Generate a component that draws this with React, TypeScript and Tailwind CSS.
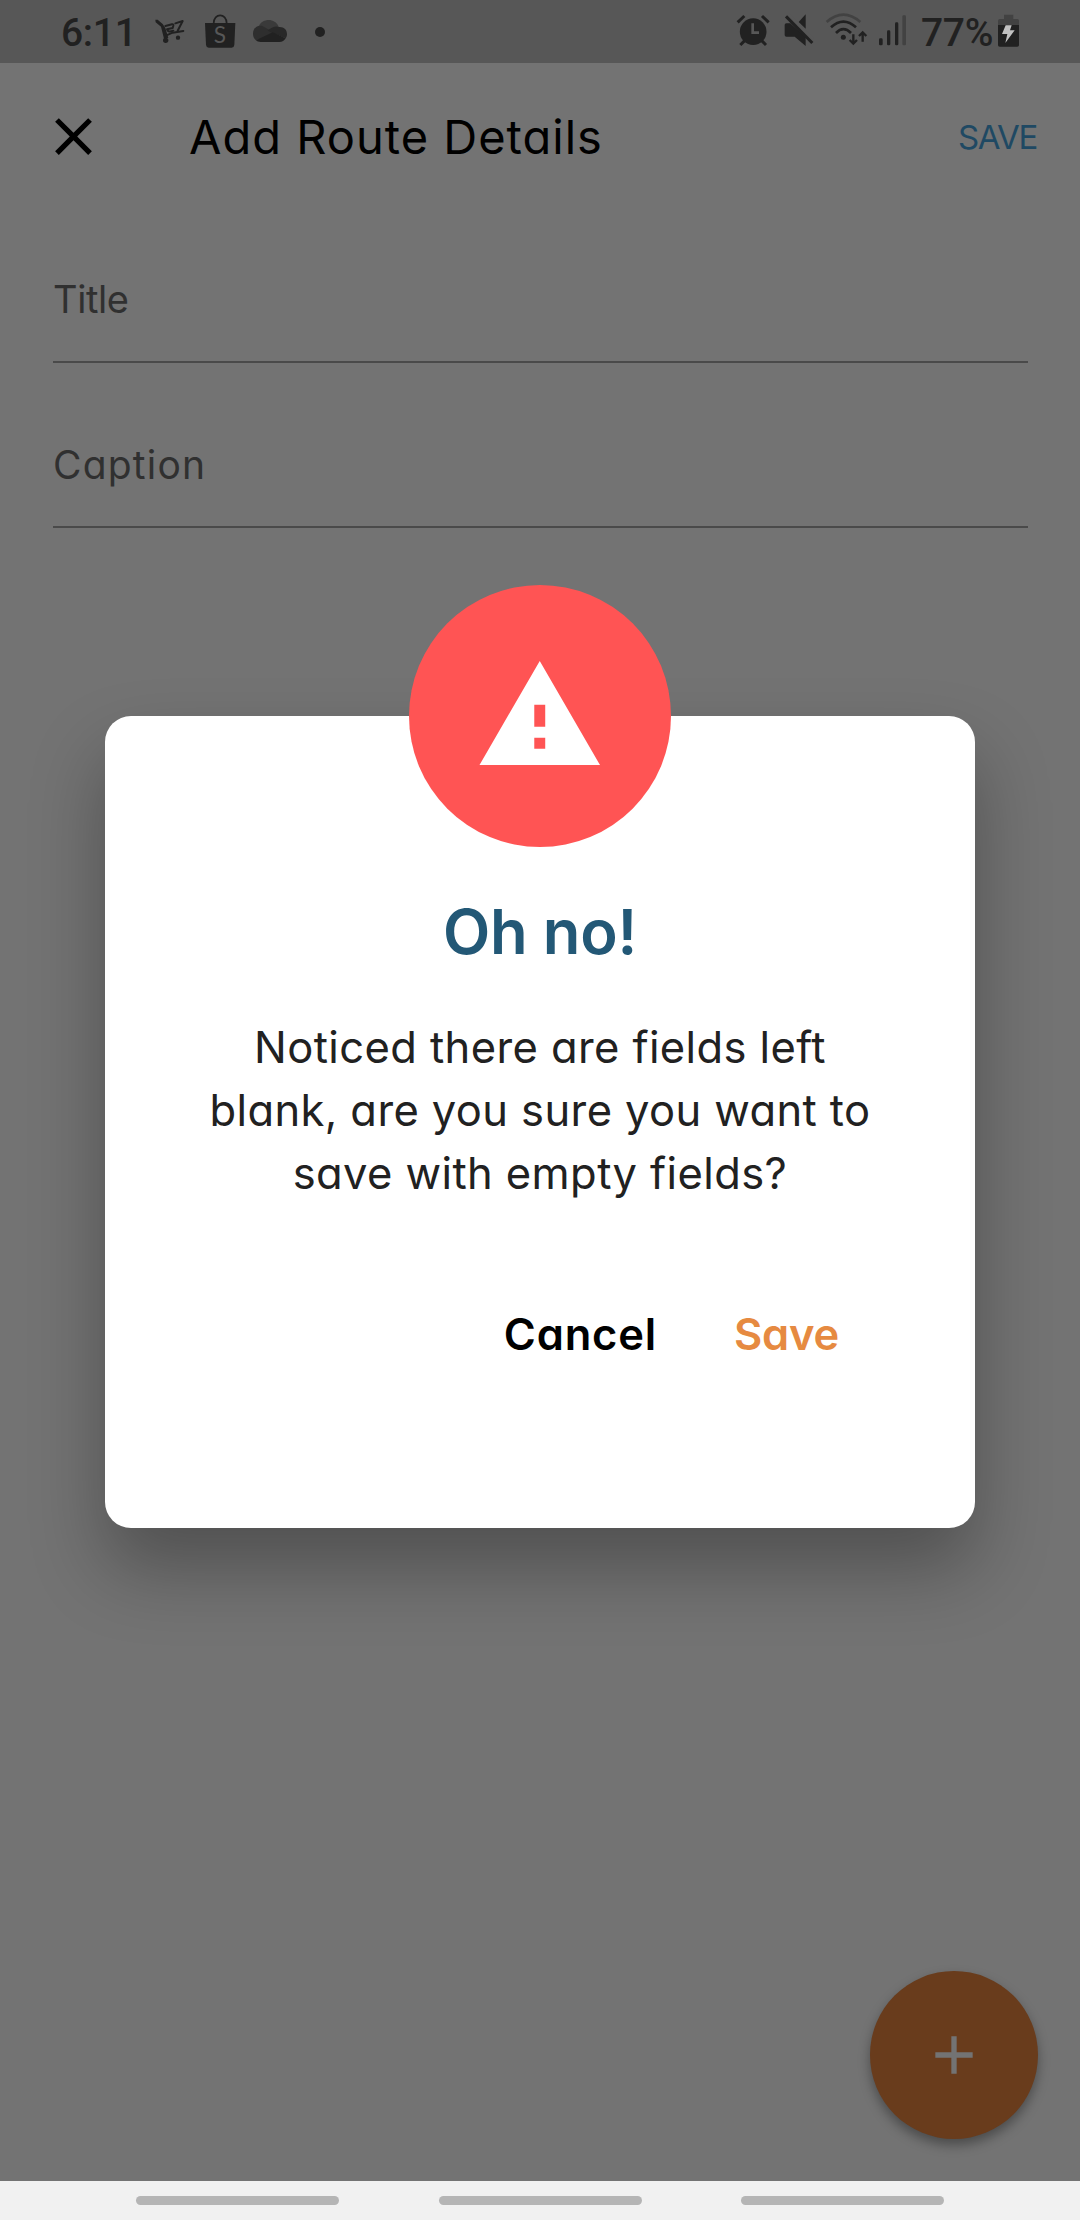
import type { ReactNode } from 'react';

const INK = '#212121';

// Status icons share a 189-unit tall drawing space, three units per pixel.
function StatusIcon({ x, w, children }: { x: number; w: number; children: ReactNode }) {
  return (
    <svg className="shrink-0" width={w / 3} height={63} viewBox={`${x} 0 ${w} 189`} fill={INK}>
      {children}
    </svg>
  );
}

function StatusBar() {
  return (
    <div className="flex h-[63px] shrink-0 items-center justify-between bg-[#575757] pr-[61px] pl-[61px] font-['Roboto',sans-serif] text-[39px] leading-[60px] font-medium text-[#212121]">
      <div className="flex items-center">
        <span className="w-[92px] pt-[2px] tracking-[-0.3px]">6:11</span>
        <StatusIcon x={339} w={102}>
          <path d="M346 59 L353 59 L368 72 L376 84 L385 114 L372 116 L363 80 L347 67 Z" />
          <g fill="none" stroke={INK} strokeLinecap="round" strokeLinejoin="round" strokeWidth={6}>
            <path d="M376 78 L396 73 Q401 72 400 77 L398 84 L381 88 Q384 99 400 92" />
            <path d="M406 70 L428 63 L413 92" />
            <path d="M379 106 L398 98 L430 93" />
          </g>
          <circle cx={377} cy={121} r={8} />
          <circle cx={414} cy={113} r={6.5} />
        </StatusIcon>
        <div className="ml-4 flex">
          <StatusIcon x={489} w={102}>
            <path d="M495 69 H586 L583 135 Q582 143 575 143 H506 Q499 143 498 135 Z" />
            <path d="M521 70 C521 38 560 38 560 70" fill="none" stroke={INK} strokeWidth={5} />
            <text x={540} y={129} textAnchor="middle" fontFamily="Lato" fontSize={68} fontWeight={400} fill="#575757">
              S
            </text>
          </StatusIcon>
        </div>
        <div className="ml-3.5 flex">
          <StatusIcon x={633} w={114}>
            <path d="M657 77 C667 55 705 52 716 80 L690 92 Z" fill="#3a3a3a" />
            <path d="M639 101 C639 84 652 74 667 78 L712 103 L648 121 C642 116 639 110 639 101 Z" fill="#2e2e2e" />
            <path d="M683 92 C698 77 712 78 717 81 C732 80 741 90 741 102 C741 107 740 111 737 115 Z" fill="#282828" />
            <path d="M648 121 L698 97 L737 115 C733 122 727 126 718 126 H662 C656 126 651 124 648 121 Z" />
          </StatusIcon>
        </div>
        <div className="ml-[26px] size-2.5 rounded-full bg-[#212121]" />
      </div>
      <div className="flex items-center">
        <StatusIcon x={48} w={102}>
          <g stroke={INK} strokeWidth={9}>
            <path d="M53 67 L73 48 M146 67 L126 48 M74 122 L61 135 M125 122 L138 135" />
          </g>
          <circle cx={99.5} cy={95} r={40} />
          <path d="M98 70 V98 H117" fill="none" stroke="#575757" strokeWidth={8} />
        </StatusIcon>
        <div className="ml-3.5 flex">
          <StatusIcon x={192} w={90}>
            <path d="M257 43 V86 L236 66 Z" />
            <path d="M194 75 Q194 70 199 70 H211 L257 112 V138 L224 110 H199 Q194 110 194 105 Z" />
            <path d="M205 42 L284 122" stroke="#575757" strokeWidth={7} />
            <path d="M198 49 L277 129" stroke={INK} strokeWidth={9} />
          </StatusIcon>
        </div>
        <div className="ml-[11px] flex">
          <StatusIcon x={315} w={129}>
            <g fill="none" strokeWidth={8}>
              <path d="M320 66 Q370 22 421 66" stroke="#424242" />
              <path d="M333 82 Q370 48 408 82" stroke={INK} />
              <path d="M348 99 Q370 76 393 99" stroke={INK} />
            </g>
            <circle cx={370} cy={112} r={7.5} />
            <path d="M400 103 V131 M389 120 L400 131 L411 120 M428 125 V97 M417 108 L428 97 L439 108" fill="none" stroke={INK} strokeWidth={7} />
          </StatusIcon>
        </div>
        <div className="ml-[11px] flex">
          <StatusIcon x={477} w={84}>
            <rect x={477} y={115} width={11} height={21} rx={4} />
            <rect x={501} y={91} width={10} height={45} rx={4} />
            <rect x={525} y={67} width={10} height={69} rx={4} />
            <rect x={547} y={46} width={11} height={90} rx={4} fill="#424242" />
          </StatusIcon>
        </div>
        <span className="ml-3.5 w-[77px] pt-[2px] tracking-[-0.3px]">77%</span>
        <StatusIcon x={834} w={63}>
          <path d="M852 44 H880 V57 H892 Q897 57 897 62 V76 H834 V62 Q834 57 839 57 H852 Z" fill="#424242" />
          <path d="M834 75 H897 V135 Q897 140 892 140 H839 Q834 140 834 135 Z" />
          <path d="M857 76 H875 L870 91 H884 L856 129 L862 102 H846 Z" fill="#c2c2c2" />
        </StatusIcon>
      </div>
    </div>
  );
}

function AppBar() {
  return (
    <header className="flex h-[147px] shrink-0 items-center pr-[43px] pl-[42px]">
      <svg width={63} height={63} viewBox="0 0 24 24" fill="#000">
        <path d="M19 6.41L17.59 5 12 10.59 6.41 5 5 6.41 10.59 12 5 17.59 6.41 19 12 13.41 17.59 19 19 17.59 13.41 12z" />
      </svg>
      <h1 className="ml-[84px] flex-1 pt-px text-[47px] leading-[60px] tracking-[1px] text-black">Add Route Details</h1>
      <button className="text-[33px] leading-[48px] tracking-[-1.3px] text-[#1f4963]">SAVE</button>
    </header>
  );
}

function NavBar() {
  return (
    <div className="flex h-[39px] shrink-0 justify-center gap-[99.5px] bg-[#f1f1f1] pt-[15px]">
      <div className="h-[9px] w-[203px] rounded-full bg-[#b5b5b5]" />
      <div className="h-[9px] w-[203px] rounded-full bg-[#b5b5b5]" />
      <div className="h-[9px] w-[203px] rounded-full bg-[#b5b5b5]" />
    </div>
  );
}

function Dialog() {
  return (
    <div className="absolute inset-0 flex flex-col items-center overflow-hidden pt-[716px]">
      <div className="relative flex h-[811.5px] w-[870px] flex-col items-center rounded-[26px] bg-white pt-[180px] shadow-[0_40px_74px_rgba(0,0,0,0.3)]">
        <div className="absolute -top-[131px] flex size-[262px] items-center justify-center rounded-full bg-[#ff5454]">
          <svg width={131.5} height={131.5} viewBox="0 0 24 24" fill="#fff">
            <path d="M1 21h22L12 2 1 21zm12-3h-2v-2h2v2zm0-4h-2v-4h2v4z" />
          </svg>
        </div>
        <h2 className="text-[61.5px] leading-[72px] font-semibold tracking-[-0.2px] text-[#235876]">Oh no!</h2>
        <p className="mt-12 text-center text-[43.5px] leading-[63px] tracking-[0.4px] whitespace-nowrap text-[#212121]">
          Noticed there are fields left
          <br />
          blank, are you sure you want to
          <br />
          save with empty fields?
        </p>
        <div className="mt-[99px] flex gap-[77px] self-end pr-[136px] text-[43.5px] leading-[60px] font-semibold">
          <button className="tracking-[0.8px] text-black">Cancel</button>
          <button className="tracking-[-0.2px] text-[#e68a41]">Save</button>
        </div>
      </div>
    </div>
  );
}

export default function App() {
  return (
    <div className="relative flex h-[2220px] w-[1080px] flex-col bg-[#737373] font-['Inter',sans-serif] [font-feature-settings:'cv11']">
      <StatusBar />
      <AppBar />
      <main className="flex flex-1 flex-col px-[53px] leading-[50px] text-[#303030]">
        <div className="mr-[-1px] h-[153px] border-b-2 border-[#4a4a4a] pt-16 text-[38px] tracking-[-0.4px]">Title</div>
        <div className="mr-[-1px] h-[165px] border-b-2 border-[#4a4a4a] pt-[77px] text-[39px] tracking-[1.2px]">Caption</div>
        <button className="mt-auto mr-[-11px] mb-[42px] flex size-[168px] items-center justify-center self-end rounded-full bg-[#693c1c] shadow-[0_6px_12px_rgba(0,0,0,0.35)]">
          <svg width={64} height={64} viewBox="0 0 24 24" fill="#737373">
            <path d="M19 13h-6v6h-2v-6H5v-2h6V5h2v6h6v2z" />
          </svg>
        </button>
      </main>
      <NavBar />
      <Dialog />
    </div>
  );
}
